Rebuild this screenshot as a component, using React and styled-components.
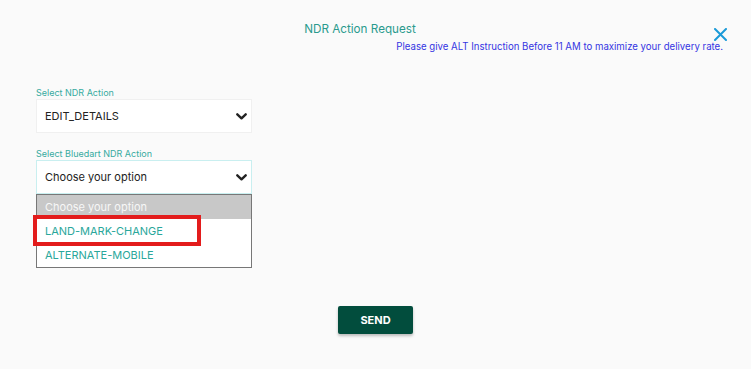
import { styled, createGlobalStyle } from "styled-components";

const GlobalStyle = createGlobalStyle`
   html, body {
      margin: 0;
      padding: 0;
      background: #fafafa;
      font-family: Inter, "Noto Sans", sans-serif;
   }
`;

const ChevronDown = () => (
   <svg width="11" height="7" viewBox="0 0 11 7" fill="none">
      <path d="M1.3 1.3 L5.5 5.3 L9.7 1.3" stroke="#222" strokeWidth="2.4" strokeLinecap="round" strokeLinejoin="round" />
   </svg>
);

const options = ["LAND-MARK-CHANGE", "ALTERNATE-MOBILE"];

const App = () => {
   return (
      <>
         <GlobalStyle />
         <Page>
            <Header>
               <Title>NDR Action Request</Title>
               <CloseButton aria-label="close">
                  <svg width="13" height="13" viewBox="0 0 13 13">
                     <path d="M1 1 L12 12 M12 1 L1 12" stroke="#1b9ad8" strokeWidth="2" strokeLinecap="round" />
                  </svg>
               </CloseButton>
            </Header>
            <Notice>Please give ALT Instruction Before 11 AM to maximize your delivery rate.</Notice>

            <Form>
               <Field>
                  <Label>Select NDR Action</Label>
                  <SelectBox>
                     <span>EDIT_DETAILS</span>
                     <ChevronDown />
                  </SelectBox>
               </Field>

               <Field $gap>
                  <Label>Select Bluedart NDR Action</Label>
                  <SelectBox $focused>
                     <span>Choose your option</span>
                     <ChevronDown />
                  </SelectBox>
                  <OptionList>
                     <Option $placeholder>Choose your option</Option>
                     {options.map((opt) => (
                        <Option key={opt}>{opt}</Option>
                     ))}
                     <Highlight />
                  </OptionList>
               </Field>
            </Form>

            <Footer>
               <SendButton>SEND</SendButton>
            </Footer>
         </Page>
      </>
   );
};

export default App;

const Page = styled.div`
   width: 751px;
   height: 369px;
   box-sizing: border-box;
   padding: 21px 28px 0 36px;
`;

const Header = styled.div`
   display: flex;
   align-items: flex-start;
   height: 20px;
`;

const Title = styled.div`
   flex: 1;
   text-align: center;
   padding-right: 30px;
   font-size: 11.7px;
   line-height: 16px;
   color: #2a9a8e;
`;

const CloseButton = styled.button`
   margin-top: 7px;
   margin-right: -4px;
   padding: 0;
   border: none;
   background: none;
   display: flex;
   cursor: pointer;
`;

const Notice = styled.div`
   text-align: right;
   font-size: 9.65px;
   line-height: 12px;
   color: #3535e2;
`;

const Form = styled.div`
   width: 216px;
   margin-top: 34px;
`;

const Field = styled.div`
   display: flex;
   flex-direction: column;
   margin-top: ${({ $gap }) => ($gap ? "15px" : "0")};
`;

const Label = styled.label`
   font-size: 9px;
   line-height: 11px;
   color: #36aaa0;
   margin-bottom: 1px;
`;

const SelectBox = styled.div`
   box-sizing: border-box;
   height: 34px;
   display: flex;
   align-items: center;
   justify-content: space-between;
   padding: 0 4px 0 8px;
   background: #fff;
   border: 1px solid ${({ $focused }) => ($focused ? "#c9eff0" : "#f0f0f0")};
   font-size: 11px;
   color: #222;
`;

const OptionList = styled.div`
   position: relative;
   border: 1px solid #777;
   background: #fff;
`;

const Option = styled.div`
   height: 24px;
   display: flex;
   align-items: center;
   padding-left: 8px;
   font-size: 11px;
   color: ${({ $placeholder }) => ($placeholder ? "#f7f7f7" : "#2aa79b")};
   background: ${({ $placeholder }) => ($placeholder ? "#c8c8c8" : "#fff")};
`;

const Highlight = styled.div`
   position: absolute;
   left: -4px;
   top: 20px;
   width: 168px;
   height: 31px;
   box-sizing: border-box;
   border: 4px solid #e31c1c;
   pointer-events: none;
`;

const Footer = styled.div`
   display: flex;
   justify-content: center;
   margin: 38px -28px 0 -36px;
`;

const SendButton = styled.button`
   width: 75px;
   height: 28px;
   border: none;
   border-radius: 2px;
   background: #024d3d;
   color: #fff;
   font-family: Inter, "Noto Sans", sans-serif;
   font-size: 11px;
   font-weight: 700;
   box-shadow: 0 2px 3px rgba(0, 0, 0, 0.25);
   cursor: pointer;
`;
